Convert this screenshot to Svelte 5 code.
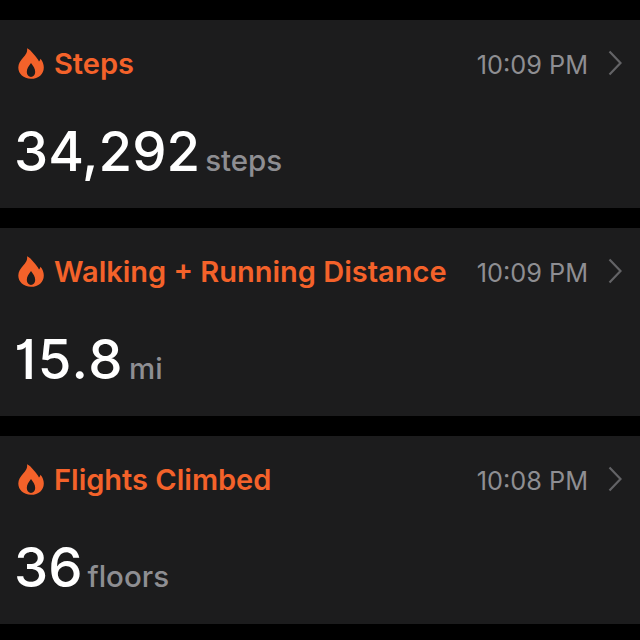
<script>
  const cards = [
    { title: 'Steps', time: '10:09 PM', value: '34,292', unit: 'steps' },
    { title: 'Walking + Running Distance', time: '10:09 PM', value: '15.8', unit: 'mi', wide: true },
    { title: 'Flights Climbed', time: '10:08 PM', value: '36', unit: 'floors' }
  ];
</script>

<div class="list">
  {#each cards as card}
    <section class="card">
      <header class="head">
        <svg class="flame" viewBox="0 0 26 31" width="26" height="31">
          <path fill="#f4622a" fill-rule="evenodd" d="M9 0.3C11.5 1.5 13.5 3.5 15.5 6C18 9 20 11.2 21 13.5C22 12.5 22.3 11.6 22.5 10.8C24.8 13.6 25.8 16.5 25.8 19.4C25.8 26 20.5 30.8 13 30.8C5.5 30.8 0.3 26 0.3 19.6C0.3 15.5 2.5 12.6 5 9.8C7.5 7 9.8 4.5 9 0.3ZM13 15C10.8 18 8.8 20.6 8.8 24C8.8 26.9 10.7 28.9 13 28.9C15.3 28.9 17.2 26.9 17.2 24C17.2 20.6 15.2 18 13 15Z" />
        </svg>
        <span class="title">{card.title}</span>
        <span class="time">{card.time}</span>
        <svg class="chev" viewBox="0 0 14 26" width="14" height="26">
          <path d="M1.5 1.5L12.5 13L1.5 24.5" fill="none" stroke="#636366" stroke-width="2.2" />
        </svg>
      </header>
      <div class="reading">
        <span class="value" class:wide={card.wide}>{card.value}</span>
        <span class="unit">{card.unit}</span>
      </div>
    </section>
  {/each}
</div>

<style>
  :global(body) {
    margin: 0;
    background: #000;
  }

  .list {
    display: flex;
    flex-direction: column;
    gap: 20px;
    height: 640px;
    padding-top: 20px;
    box-sizing: border-box;
    overflow: hidden;
    font-family: Inter, "Liberation Sans", sans-serif;
  }

  .card {
    height: 188px;
    flex: none;
    background: #1c1c1d;
    box-sizing: border-box;
    padding: 27px 18px 0 18px;
  }

  .head {
    display: flex;
    align-items: center;
    height: 32px;
  }

  .flame {
    flex: none;
    margin-right: 11px;
  }

  .title {
    font-size: 29px;
    font-weight: 600;
    color: #f4622a;
    flex: 1;
    white-space: nowrap;
    margin-left: -1px;
  }

  .time {
    font-size: 25.3px;
    color: #8e8e92;
    margin-right: 20px;
    padding-top: 2px;
  }

  .chev {
    flex: none;
  }

  .reading {
    display: flex;
    align-items: baseline;
    gap: 5px;
    margin-top: 42px;
    margin-left: -4px;
  }

  .value {
    font-size: 54.5px;
    line-height: 60px;
    font-weight: 500;
    font-feature-settings: "cv01";
    color: #fff;
  }

  .value.wide {
    letter-spacing: 1.5px;
  }

  .unit {
    font-size: 29.5px;
    font-weight: 500;
    color: #8e8e92;
  }
</style>
